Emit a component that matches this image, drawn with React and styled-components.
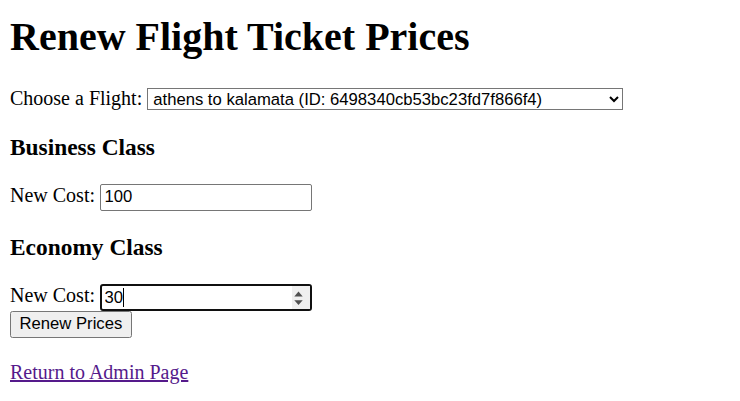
import React from "react";
import styled, { createGlobalStyle } from "styled-components";

const Global = createGlobalStyle`
  html, body { margin: 0; padding: 0; background: #fff; }
  body {
    font-family: "Liberation Serif", "Times New Roman", serif;
    font-size: 20px;
    color: #000;
  }
`;

const Page = styled.main`
  padding: 0.5px 10px 0;
`;

const Title = styled.h1`
  margin: 13.5px 0 26.8px;
  font-size: 40px;
  line-height: 46px;
  font-weight: bold;
`;

const Row = styled.div`
  line-height: 23px;
  font-size: 20px;
  white-space: nowrap;
`;

const Heading = styled.h3`
  margin: 23.4px 0;
  font-size: 23.4px;
  line-height: 27px;
  font-weight: bold;
`;

const controlFont = `
  font-family: "Liberation Sans", Arial, sans-serif;
  font-size: 16.67px;
  color: #000;
`;

const Select = styled.select`
  ${controlFont}
  box-sizing: border-box;
  width: 476px;
  height: 22.5px;
  border: 1px solid #767676;
  border-radius: 0;
  background: #fff;
  padding: 0 6px 0 1px;
  margin: 0;
  vertical-align: baseline;
`;

const Field = styled.span`
  position: relative;
  display: inline-block;
  vertical-align: baseline;
`;

const Input = styled.input`
  ${controlFont}
  box-sizing: border-box;
  width: 212px;
  height: 26.6px;
  margin: 0;
  padding: 0 ${(p) => (p.$focused ? "2.5px" : "3.5px")};
  border: ${(p) => (p.$focused ? "2px solid #101010" : "1px solid #767676")};
  border-radius: ${(p) => (p.$focused ? "3px" : "2px")};
  background: #fff;
  outline: none;
  vertical-align: baseline;
`;

const Spinner = styled.span`
  position: absolute;
  top: 2px;
  bottom: 2px;
  right: 2px;
  width: 18px;
  background: #efefef;
  display: flex;
  align-items: center;
  justify-content: flex-start;
`;

const Caret = styled.span`
  position: absolute;
  left: 23px;
  top: 4px;
  width: 1px;
  height: 18.5px;
  background: #000;
`;

const Button = styled.button`
  ${controlFont}
  display: block;
  box-sizing: border-box;
  height: 26.6px;
  margin: 0;
  padding: 0 8.5px;
  border: 1px solid #767676;
  border-radius: 2.5px;
  background: #efefef;
`;

const Footer = styled.p`
  margin: 23px 0 0;
  line-height: 23px;
`;

const Link = styled.a`
  color: #551a8b;
  text-decoration: underline;
`;

function SpinIcon() {
  return (
    <svg width="18" height="22" viewBox="0 0 18 22" aria-hidden="true">
      <path d="M2.3 9.4 L6.5 4.6 L10.7 9.4 Z" fill="#505050" />
      <path d="M2.3 13.2 L10.7 13.2 L6.5 18 Z" fill="#505050" />
    </svg>
  );
}

export default function App() {
  return (
    <>
      <Global />
      <Page>
        <Title>Renew Flight Ticket Prices</Title>
        <Row>
          Choose a Flight:{" "}
          <Select defaultValue="6498340cb53bc23fd7f866f4">
            <option value="6498340cb53bc23fd7f866f4">
              athens to kalamata (ID: 6498340cb53bc23fd7f866f4)
            </option>
          </Select>
        </Row>
        <Heading>Business Class</Heading>
        <Row>
          New Cost:{" "}
          <Field>
            <Input type="text" defaultValue="100" />
          </Field>
        </Row>
        <Heading>Economy Class</Heading>
        <Row>
          New Cost:{" "}
          <Field>
            <Input type="text" defaultValue="30" $focused />
            <Caret />
            <Spinner>
              <SpinIcon />
            </Spinner>
          </Field>
        </Row>
        <Button type="button">Renew Prices</Button>
        <Footer>
          <Link href="#admin">Return to Admin Page</Link>
        </Footer>
      </Page>
    </>
  );
}
